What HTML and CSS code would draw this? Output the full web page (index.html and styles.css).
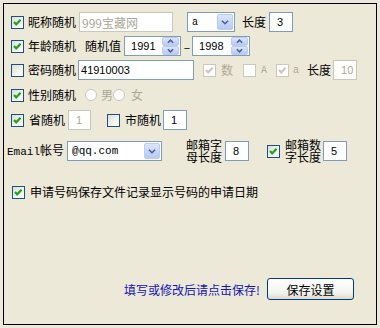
FILE: index.html
```html
<!DOCTYPE html>
<html>
<head>
<meta charset="utf-8">
<link rel="stylesheet" href="styles.css">
</head>
<body>
<div class="panel">
  <div class="row r1">
    <span class="cb on"><svg viewBox="0 0 11 11"><polyline points="2,5 4.2,7.3 8.6,2.8"/></svg></span>
    <span class="lbl">昵称随机</span>
    <span class="inp dis nick">999宝藏网</span>
    <span class="combo c-case"><span class="mono">a</span><span class="drop"><svg viewBox="0 0 15 16"><polyline points="4,6.5 7.5,10 11,6.5"/></svg></span></span>
    <span class="lbl len1">长度</span>
    <span class="inp num small ml3">3</span>
  </div>
  <div class="row r2">
    <span class="cb on"><svg viewBox="0 0 11 11"><polyline points="2,5 4.2,7.3 8.6,2.8"/></svg></span>
    <span class="lbl">年龄随机</span>
    <span class="lbl rand">随机值</span>
    <span class="spin s1"><span class="num">1991</span><span class="arrows"><span class="up"><svg viewBox="0 0 15 8"><polyline points="4.5,5.5 7.5,2.5 10.5,5.5"/></svg></span><span class="dn"><svg viewBox="0 0 15 8"><polyline points="4.5,2.5 7.5,5.5 10.5,2.5"/></svg></span></span></span>
    <span class="dash">–</span>
    <span class="spin s2"><span class="num">1998</span><span class="arrows"><span class="up"><svg viewBox="0 0 15 8"><polyline points="4.5,5.5 7.5,2.5 10.5,5.5"/></svg></span><span class="dn"><svg viewBox="0 0 15 8"><polyline points="4.5,2.5 7.5,5.5 10.5,2.5"/></svg></span></span></span>
  </div>
  <div class="row r3">
    <span class="cb"></span>
    <span class="lbl">密码随机</span>
    <span class="inp num pwd">41910003</span>
    <span class="cb dis on opt-num"><svg viewBox="0 0 11 11"><polyline points="2,5 4.2,7.3 8.6,2.8"/></svg></span>
    <span class="lbl gray ml5">数</span>
    <span class="cb dis opt-up"></span>
    <span class="mono gray ml5">A</span>
    <span class="cb dis on opt-low"><svg viewBox="0 0 11 11"><polyline points="2,5 4.2,7.3 8.6,2.8"/></svg></span>
    <span class="mono gray ml4">a</span>
    <span class="lbl ml8">长度</span>
    <span class="inp num dis small ml2">10</span>
  </div>
  <div class="row r4">
    <span class="cb on"><svg viewBox="0 0 11 11"><polyline points="2,5 4.2,7.3 8.6,2.8"/></svg></span>
    <span class="lbl">性别随机</span>
    <span class="radio r-male"></span>
    <span class="lbl gray ml4">男</span>
    <span class="radio"></span>
    <span class="lbl gray ml6">女</span>
  </div>
  <div class="row r5">
    <span class="cb on"><svg viewBox="0 0 11 11"><polyline points="2,5 4.2,7.3 8.6,2.8"/></svg></span>
    <span class="lbl ml5">省随机</span>
    <span class="inp num dis tiny ml3">1</span>
    <span class="cb city"></span>
    <span class="lbl ml5">市随机</span>
    <span class="inp num small ml2">1</span>
  </div>
  <div class="row r6">
    <span class="lbl email"><span class="mono big">Email</span>帐号</span>
    <span class="combo c-mail"><span class="mono big">@qq.com</span><span class="drop"><svg viewBox="0 0 15 16"><polyline points="4,6.5 7.5,10 11,6.5"/></svg></span></span>
    <span class="lbl two mail-alpha">邮箱字<br>母长度</span>
    <span class="inp num small ml3">8</span>
    <span class="cb on mail-cb"><svg viewBox="0 0 11 11"><polyline points="2,5 4.2,7.3 8.6,2.8"/></svg></span>
    <span class="lbl two ml5">邮箱数<br>字长度</span>
    <span class="inp num small ml2">5</span>
  </div>
  <div class="row r7">
    <span class="cb on"><svg viewBox="0 0 11 11"><polyline points="2,5 4.2,7.3 8.6,2.8"/></svg></span>
    <span class="lbl ml5">申请号码保存文件记录显示号码的申请日期</span>
  </div>
  <div class="row foot">
    <span class="hint">填写或修改后请点击保存!</span>
    <span class="btn">保存设置</span>
  </div>
</div>
</body>
</html>
```

FILE: styles.css
```css
* { box-sizing: border-box; }
body {
  margin: 0;
  background: #ece9d8;
  font: 12px "Noto Sans CJK SC", "Liberation Sans", sans-serif;
  color: #000;
}
.panel {
  margin: 3px;
  width: 374px;
  height: 322px;
  border: 1px solid #000;
  padding: 8px 0 0 7px;
  display: flex;
  flex-direction: column;
}
.row {
  display: flex;
  align-items: center;
  height: 20px;
  white-space: nowrap;
  flex: none;
}
.r2, .r3 { margin-top: 4px; }
.r4, .r5 { margin-top: 5px; }
.r6 { margin-top: 9px; height: 24px; margin-left: -4px; }
.r7 { margin-top: 19px; margin-left: 1px; }
.foot {
  margin-top: auto;
  margin-bottom: 24px;
  height: 22px;
  justify-content: flex-end;
  padding-right: 22px;
}

.lbl { margin-left: 4px; line-height: 14px; }
.gray { color: #aca899; }
.mono { font-family: "Liberation Mono", monospace; font-size: 10px; }
.mono.big { font-size: 11px; }
.ml2 { margin-left: 2px; }
.ml3 { margin-left: 3px; }
.ml4 { margin-left: 4px; }
.ml5 { margin-left: 5px; }
.ml6 { margin-left: 6px; }
.ml8 { margin-left: 8px; }

/* checkbox */
.cb {
  flex: none;
  width: 13px;
  height: 13px;
  border: 1px solid #1c5180;
  background: linear-gradient(135deg, #dcdcd7 0%, #f4f4f0 60%, #ffffff 100%);
  display: flex;
}
.cb svg { width: 11px; height: 11px; }
.cb polyline { fill: none; stroke: #21a121; stroke-width: 2.2; }
.cb.dis { border-color: #cac8bb; background: #fff; }
.cb.dis polyline { stroke: #cac8bb; }
.opt-num { margin-left: 9px; }
.opt-up { margin-left: 10px; }
.opt-low { margin-left: 9px; }
.city { margin-left: 16px; }
.mail-cb { margin-left: 18px; }

/* radio */
.radio {
  flex: none;
  width: 12px;
  height: 12px;
  border-radius: 50%;
  border: 1px solid #cac8bb;
  background: #fff;
}
.r-male { margin-left: 9px; }

/* text inputs */
.inp {
  flex: none;
  height: 20px;
  border: 1px solid #7f9db9;
  background: #fff;
  display: flex;
  align-items: center;
  padding-left: 4px;
}
.inp.dis { border-color: #c9c7ba; color: #aca899; }
.num { font-family: "Liberation Sans", sans-serif; font-size: 11px; }
.nick { width: 94px; margin-left: 3px; padding-left: 2px; }
.pwd { width: 116px; margin-left: 2px; padding-left: 2px; }
.small { width: 24px; padding-left: 7px; }
.tiny { width: 23px; padding-left: 7px; }

/* combo */
.combo {
  flex: none;
  height: 20px;
  border: 1px solid #7f9db9;
  background: #fff;
  display: flex;
  align-items: center;
  justify-content: space-between;
  padding: 1px 1px 1px 4px;
}
.c-case { width: 48px; margin-left: 14px; }
.c-mail { width: 95px; margin-left: 3px; }
.drop {
  width: 16px;
  height: 16px;
  border: 1px solid #bccbf2;
  border-radius: 2px;
  background: linear-gradient(#dbe5fc, #b6c9f5);
  display: flex;
}
.drop svg { width: 14px; height: 14px; }
.drop polyline, .arrows polyline { fill: none; stroke: #4d6185; stroke-width: 1.8; }
.len1 { margin-left: 7px; }

/* spinner */
.rand { margin-left: 9px; }
.spin {
  flex: none;
  height: 20px;
  border: 1px solid #7f9db9;
  background: #fff;
  display: flex;
  align-items: center;
  justify-content: space-between;
  padding: 1px 1px 1px 6px;
}
.s1 { width: 57px; margin-left: 3px; }
.s2 { width: 58px; }
.arrows {
  width: 17px;
  height: 18px;
  display: flex;
  flex-direction: column;
}
.arrows > span {
  flex: 1;
  border: 1px solid #bccbf2;
  border-radius: 2px;
  background: linear-gradient(#dbe5fc, #b6c9f5);
  display: flex;
}
.arrows svg { width: 15px; height: 7px; }
.dash { width: 10px; text-align: center; margin-left: 1px; }

.email { margin-left: 0; }
.two { line-height: 12px; }
.mail-alpha { margin-left: 24px; }

.hint { color: #1414b4; }
.btn {
  margin-left: 7px;
  width: 87px;
  height: 22px;
  border: 1px solid #003c74;
  border-radius: 3px;
  background: linear-gradient(#ffffff, #f3f3ef 70%, #dcd8cf);
  display: flex;
  align-items: center;
  justify-content: center;
}
```
